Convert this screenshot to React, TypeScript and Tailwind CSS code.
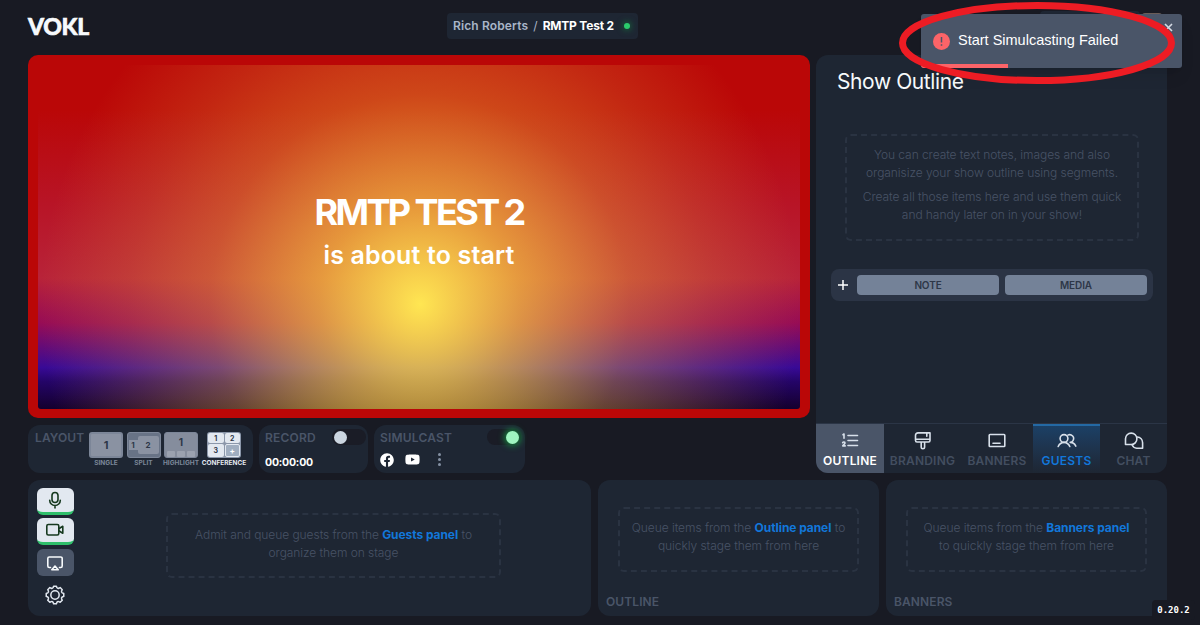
import type { ReactNode } from "react";
import clsx from "clsx";
import { FaFacebook, FaYoutube } from "react-icons/fa";

const iconProps = {
  fill: "none",
  stroke: "currentColor",
  strokeWidth: 1.6,
  strokeLinecap: "round" as const,
  strokeLinejoin: "round" as const,
};

const OutlineIcon = () => (
  <svg width="18" height="18" viewBox="0 0 18 18" {...iconProps}>
    <path d="M7 3.500h9.500M7 8.500h9.500M7 13.500h9.500" />
    <path d="M2 2.700 3 2v4.200M1.700 10.700c.5-1 2.400-.8 2.300.4 0 1-1.600 1.700-2.300 2.800h2.500" />
  </svg>
);

const BrandingIcon = () => (
  <svg width="18" height="18" viewBox="0 0 18 18" {...iconProps}>
    <path d="M4 .9h12v7.600A1.500 1.500 0 0 1 14.500 10H3a1.500 1.500 0 0 1-1.500-1.500V3.400A2.500 2.500 0 0 1 4 .9zM1.500 7.200H16M12.800 1v3.300M7.200 10v5a1.700 1.700 0 0 0 3.400 0v-5" />
  </svg>
);

const BannersIcon = () => (
  <svg width="18" height="18" viewBox="0 0 18 18" {...iconProps}>
    <rect x="1.200" y="2.500" width="15.600" height="12" rx=".8" />
    <path d="M5 11.200h7" />
  </svg>
);

const GuestsIcon = () => (
  <svg width="20" height="18" viewBox="0 0 20 18" {...iconProps}>
    <circle cx="7" cy="6.500" r="3.900" />
    <path d="M1.200 14.500c1.200-2.600 3.200-4.100 5.800-4.100s4.600 1.500 5.800 4.100M10.900 3.100a3.900 3.900 0 1 1 2.300 7.300c2.500 0 4.400 1.300 5.600 3.700" />
  </svg>
);

const ChatIcon = () => (
  <svg width="20" height="18" viewBox="0 0 20 18" {...iconProps}>
    <path d="M1.500 12.500V6.800a5.700 5.700 0 1 1 5.700 5.700z" />
    <path d="M13.300 5a5.700 5.700 0 0 1 5.300 5.700v5.500h-5.900a5.400 5.400 0 0 1-4.700-3.400" />
  </svg>
);

const MicIcon = () => (
  <svg width="18" height="18" viewBox="0 0 18 18" {...iconProps}>
    <rect x="6" y="1.500" width="6" height="10" rx="3" />
    <path d="M3.700 9.200a5.300 5.300 0 0 0 10.600 0M9 14.500V17" />
  </svg>
);

const CameraIcon = () => (
  <svg width="18" height="18" viewBox="0 0 18 18" {...iconProps}>
    <rect x=".8" y="3.500" width="12" height="10.500" rx="1.500" />
    <path d="M12.800 7.800 16.800 5.300v7L12.800 9.800" />
  </svg>
);

const CastIcon = () => (
  <svg width="18" height="18" viewBox="0 0 18 18" {...iconProps}>
    <path d="M4.500 13.500H3.300A1.500 1.500 0 0 1 1.800 12V4.500A1.500 1.500 0 0 1 3.300 3h11.400a1.500 1.500 0 0 1 1.500 1.500V12a1.500 1.500 0 0 1-1.500 1.500h-1.200" />
    <path d="m9 12 3.200 3.800H5.800z" />
  </svg>
);

const GearIcon = () => (
  <svg width="20" height="20" viewBox="0 0 24 24" {...iconProps} strokeWidth={1.8}>
    <circle cx="12" cy="12" r="5" />
    <path d="M9.700 3.200 10.300 1.500h3.400l.6 1.700q.9 1.200 2.300.7l1.600-.8 2.500 2.500-.8 1.600q-.5 1.400.8 2.200l1.800.8v3.500l-1.800.7q-1.300.8-.8 2.200l.8 1.700-2.500 2.500-1.600-.8q-1.400-.5-2.300.7l-.6 1.800h-3.400l-.6-1.800q-.9-1.200-2.300-.7l-1.600.8-2.500-2.500.8-1.700q.5-1.400-.8-2.200l-1.800-.7v-3.500l1.800-.8q1.300-.8.8-2.200l-.8-1.600 2.500-2.500 1.600.8q1.400.5 2.300-.7z" />
  </svg>
);

function Empty({ className, children }: { className?: string; children: ReactNode }) {
  return (
    <div
      className={clsx(
        "rounded-md border-2 border-dashed border-[#2a3342] text-center text-[12px] font-light leading-[18px] tracking-[-0.06px] text-[#485366]",
        className,
      )}
    >
      {children}
    </div>
  );
}

const PanelLink = ({ children }: { children: ReactNode }) => (
  <span className="font-bold text-[#1277da]">{children}</span>
);

const cell = "flex items-center justify-center rounded-[2px] bg-[#e2e8f0]";

function Layouts() {
  return (
    <div className="flex h-12 w-[225px] rounded-xl bg-[#1e2633] pl-[7px] pt-[7px]">
      <span className="w-[51px] text-[12px] font-semibold leading-[12px] tracking-[0.1px] text-[#4a5568]">
        LAYOUT
      </span>
      <div className="ml-px flex text-[9px] font-bold leading-none text-[#2d3748]">
        <div className="flex w-[38px] flex-col items-center">
          <div className="flex h-[26px] w-[34px] items-center justify-center rounded-[3px] border-2 border-[#7c8698] bg-[#8a92a2] text-[11px]">
            1
          </div>
          <LayoutName>SINGLE</LayoutName>
        </div>
        <div className="flex w-[37px] flex-col items-center">
          <div className="flex h-[26px] w-[34px] items-center rounded-[3px] border border-[#7c8698] bg-[#687386] pl-px text-[8px]">
            <div className="flex h-[10px] w-[9px] items-center justify-center bg-[#8a92a2]">1</div>
            <div className="flex h-[18px] w-[21px] items-center justify-center rounded-[2px] bg-[#8a92a2]">2</div>
          </div>
          <LayoutName>SPLIT</LayoutName>
        </div>
        <div className="flex w-[38px] flex-col items-center">
          <div className="flex h-[26px] w-[34px] flex-col items-center justify-between rounded-[3px] border border-[#7c8698] bg-[#858d9d] pt-[4px] text-[10px]">
            1
            <div className="flex gap-[2px]">
              <i className="h-[6px] w-[8px] rounded-[1px] bg-[#9ba2b0]" />
              <i className="h-[6px] w-[8px] rounded-[1px] bg-[#9ba2b0]" />
              <i className="h-[6px] w-[8px] rounded-[1px] bg-[#9ba2b0]" />
            </div>
          </div>
          <LayoutName>HIGHLIGHT</LayoutName>
        </div>
        <div className="flex w-[48px] flex-col items-center">
          <div className="grid h-[26px] w-[34px] grid-cols-2 gap-px rounded-[3px] bg-[#8b97aa] p-px text-[7px]">
            <div className={cell}>1</div>
            <div className={cell}>2</div>
            <div className={cell}>3</div>
            <div className="flex items-center justify-center rounded-[2px] border border-[#e2e8f0] bg-[#a0aec0] text-[8px] text-white">+</div>
          </div>
          <LayoutName active>CONFERENCE</LayoutName>
        </div>
      </div>
    </div>
  );
}

function LayoutName({ active, children }: { active?: boolean; children: ReactNode }) {
  return (
    <span
      className={clsx(
        "mt-[2px] whitespace-nowrap text-[6.5px] font-bold leading-[7px]",
        active ? "text-[#e2e8f0]" : "text-[#7b8699]",
      )}
    >
      {children}
    </span>
  );
}

function ControlRow() {
  return (
    <div className="mt-[7px] flex gap-[6px]">
      <Layouts />
      <div className="h-12 w-[109px] rounded-xl bg-[#1e2633] pl-[6px] pr-[2px] pt-[4px]">
        <div className="flex justify-between">
          <span className="pt-[3px] text-[12px] font-semibold leading-[12px] tracking-[0.2px] text-[#4a5568]">RECORD</span>
          <span className="flex h-[16px] w-[34px] items-center rounded-full bg-[#1a1c26] pl-[2px]">
            <i className="size-[13px] rounded-full bg-[#cbd5e0]" />
          </span>
        </div>
        <div className="mt-[12px] text-[10.500px] font-bold leading-[12px] tracking-[-0.2px] text-white">00:00:00</div>
      </div>
      <div className="h-12 w-[151px] rounded-xl bg-[#1e2633] pl-[6px] pr-[4px] pt-[4px]">
        <div className="flex justify-between">
          <span className="pt-[3px] text-[12px] font-semibold leading-[12px] tracking-[0.2px] text-[#4a5568]">SIMULCAST</span>
          <span className="flex h-[16px] w-[34px] items-center justify-end rounded-full bg-[#1a1c26] pr-[2px]">
            <i className="size-[13px] rounded-full bg-[#9ff5c0] shadow-[0_0_6px_2px_#17823f]" />
          </span>
        </div>
        <div className="mt-[7px] flex items-center text-white">
          <FaFacebook size={14} />
          <FaYoutube size={15} className="ml-[11px]" />
          <div className="ml-[18px] flex flex-col gap-[2px]">
            <i className="size-[3px] rounded-full bg-[#8490a3]" />
            <i className="size-[3px] rounded-full bg-[#8490a3]" />
            <i className="size-[3px] rounded-full bg-[#8490a3]" />
          </div>
        </div>
      </div>
    </div>
  );
}

function Stage() {
  return (
    <div className="h-[363px] w-[782px] rounded-[10px] bg-[#ba0707] px-[10px] pb-[9px] pt-[10px]">
      <div className="flex h-full flex-col items-center rounded-[3px] bg-[radial-gradient(circle_at_382px_239px,rgb(255,230,82)_0,rgba(250,205,65,0.700)_100px,rgba(240,180,55,0.370)_210px,rgba(225,150,55,0.220)_290px,rgba(220,140,60,0)_380px),linear-gradient(to_bottom,#ba0707_13%,#b81426_40%,#b82339_62%,#970c55_75%,#380a96_88%,#240468_92%,#14002d_100%)] pt-[122px] text-white">
        <h1 className="whitespace-nowrap text-[36px] font-bold leading-[50px] tracking-[-2.600px]">RMTP TEST 2</h1>
        <p className="whitespace-nowrap text-[25px] font-semibold leading-[36px] tracking-[0.150px]">is about to start</p>
      </div>
    </div>
  );
}

function Tab({
  label,
  icon,
  className,
  labelClass = "text-[#434e60]",
}: {
  label: string;
  icon: ReactNode;
  className: string;
  labelClass?: string;
}) {
  return (
    <button className={clsx("flex h-[49px] flex-col items-center pt-[8px] text-[#d8e0ea]", className)}>
      {icon}
      <span className={clsx("mt-[4px] text-[12px] font-semibold leading-[13px] tracking-[0.200px]", labelClass)}>{label}</span>
    </button>
  );
}

function Sidebar() {
  return (
    <aside className="flex h-[418px] w-[351px] flex-col overflow-hidden rounded-xl bg-[#1e2633]">
      <h2 className="pl-[21px] pt-[12px] text-[21px] leading-[30px] tracking-[-0.400px] text-[#f7fafc]">Show Outline</h2>
      <Empty className="ml-[29px] mt-[37px] h-[107px] w-[294px] pt-[10px]">
        <p>
          You can create text notes, images and also
          <br />
          organisize your show outline using segments.
        </p>
        <p className="mt-[6px]">
          Create all those items here and use them quick
          <br />
          and handy later on in your show!
        </p>
      </Empty>
      <div className="ml-[15px] mt-[28px] flex h-[32px] w-[322px] items-center rounded-lg bg-[#2b3445] pl-[6px]">
        <svg width="12" height="12" viewBox="0 0 12 12" stroke="#fff" strokeWidth="1.5">
          <path d="M6 1v10M1 6h10" />
        </svg>
        <button className="ml-[8px] h-[20px] w-[142px] rounded bg-[#748298] text-[10px] font-semibold tracking-[-0.100px] text-[#2d3748]">NOTE</button>
        <button className="ml-[6px] h-[20px] w-[142px] rounded bg-[#748298] text-[10px] font-semibold tracking-[-0.100px] text-[#2d3748]">MEDIA</button>
      </div>
      <nav className="mt-auto flex border-t border-[#2b3546]">
        <Tab label="OUTLINE" icon={<OutlineIcon />} className="w-[68px] bg-[#4a5568]" labelClass="text-white" />
        <Tab label="BRANDING" icon={<BrandingIcon />} className="w-[77px]" />
        <Tab label="BANNERS" icon={<BannersIcon />} className="w-[72px]" />
        <Tab
          label="GUESTS"
          icon={<GuestsIcon />}
          className="w-[67px] bg-linear-to-b from-[#1b4168] to-[#1e2633] shadow-[inset_0_2px_#2469a4]"
          labelClass="text-[#1277da]"
        />
        <Tab label="CHAT" icon={<ChatIcon />} className="w-[67px]" />
      </nav>
    </aside>
  );
}

function BottomRow() {
  const toggle = "flex h-[27px] w-[37px] items-center justify-center rounded-md";
  return (
    <div className="flex h-[136px] gap-[7px]">
      <section className="flex w-[563px] rounded-xl bg-[#1e2633] pl-[9px] pt-[8px]">
        <div className="flex w-[36px] flex-col items-center gap-[3px]">
          <button className={clsx(toggle, "border-b-[3px] border-[#2fbf6b] bg-[#e2e8f0] text-[#16391f]")}>
            <MicIcon />
          </button>
          <button className={clsx(toggle, "border-b-[3px] border-[#2fbf6b] bg-[#e2e8f0] text-[#16391f]")}>
            <CameraIcon />
          </button>
          <button className={clsx(toggle, "mt-px bg-[#4a5568] text-[#f7fafc]")}>
            <CastIcon />
          </button>
          <button className="mt-[6px] text-[#e2e8f0]">
            <GearIcon />
          </button>
        </div>
        <Empty className="ml-[93px] mt-[25px] h-[65px] w-[335px] pt-[11px]">
          Admit and queue guests from the <PanelLink>Guests panel</PanelLink> to
          <br />
          organize them on stage
        </Empty>
      </section>
      <section className="flex w-[281px] flex-col rounded-xl bg-[#1e2633] pt-[27px]">
        <Empty className="mx-auto h-[65px] w-[241px] pt-[10px]">
          Queue items from the <PanelLink>Outline panel</PanelLink> to
          <br />
          quickly stage them from here
        </Empty>
        <span className="pl-[8px] pt-[23px] text-[12px] font-semibold leading-[13px] tracking-[0.100px] text-[#4a5568]">OUTLINE</span>
      </section>
      <section className="flex w-[281px] flex-col rounded-xl bg-[#1e2633] pt-[27px]">
        <Empty className="mx-auto h-[65px] w-[241px] pt-[10px]">
          Queue items from the <PanelLink>Banners panel</PanelLink>
          <br />
          to quickly stage them from here
        </Empty>
        <span className="pl-[8px] pt-[23px] text-[12px] font-semibold leading-[13px] tracking-[0.100px] text-[#4a5568]">BANNERS</span>
      </section>
    </div>
  );
}

function Toast() {
  return (
    <div className="absolute left-[921px] top-[14px] flex h-[54px] w-[261px] items-center overflow-hidden rounded-[3px] bg-[#4a5568] pl-[12px] font-['Liberation_Sans',Arial,sans-serif] text-[14.500px] text-white shadow-lg">
      <svg width="17" height="17" viewBox="0 0 17 17">
        <circle cx="8.500" cy="8.500" r="8.500" fill="#fc6468" />
        <path d="M8.500 4v5.500M8.500 11.200v1.500" stroke="#4a5568" strokeWidth="1.500" />
      </svg>
      <span className="ml-[8px] whitespace-nowrap">Start Simulcasting Failed</span>
      <svg className="absolute right-[9px] top-[9px]" width="9" height="9" viewBox="0 0 9 9" stroke="#d5dbe4" strokeWidth="1.600">
        <path d="m1 1 7 7M8 1 1 8" />
      </svg>
      <div className="absolute bottom-0 left-0 h-[4px] w-[87px] bg-[#fc6468]" />
    </div>
  );
}

export default function App() {
  return (
    <div className="relative h-[625px] w-[1200px] overflow-hidden bg-[#181a23] pl-[28px] font-['Inter',sans-serif]">
      <header className="flex h-[55px] items-start">
        <div className="w-[419px] pt-[13px] font-['Lato',sans-serif] text-[23px] font-black leading-[26px] tracking-[-0.300px] text-[#f7fafc] [-webkit-text-stroke:0.6px_#f7fafc]">
          VOKL
        </div>
        <div className="mt-[13px] flex h-[26px] w-[191px] items-center whitespace-nowrap rounded bg-[#1e2633] pl-[6px] text-[12px] font-semibold tracking-[0.130px] text-[#a9b5c8]">
          Rich Roberts
          <span className="mx-[5px] font-normal">/</span>
          <span className="font-bold tracking-[-0.200px] text-white">RMTP Test 2</span>
          <i className="ml-[10px] size-[6px] rounded-full bg-[#2bcb6c] shadow-[0_0_6px_1px_#17683d]" />
        </div>
        <div className="ml-[402px] mt-[11px] h-[30px] w-[100px] rounded bg-[#1e2633]" />
        <div className="ml-[2px] mt-[13px] h-[20px] w-[20px] rounded-[3px] bg-[#6b5d58]" />
      </header>
      <div className="flex h-[425px] gap-[6px]">
        <main className="w-[782px]">
          <Stage />
          <ControlRow />
        </main>
        <Sidebar />
      </div>
      <BottomRow />
      <Toast />
      <svg className="absolute left-[890px] top-0" width="300" height="90" viewBox="890 0 300 90" fill="none">
        <ellipse cx="1037" cy="43" rx="134.500" ry="37.500" stroke="#ed1c24" strokeWidth="7" />
      </svg>
      <div className="absolute left-[1152px] top-[600px] flex h-[20px] w-[43px] items-center justify-center rounded bg-[#181a23] pt-[2px] font-['DejaVu_Sans_Mono',monospace] text-[9px] font-bold text-white">
        0.20.2
      </div>
    </div>
  );
}
